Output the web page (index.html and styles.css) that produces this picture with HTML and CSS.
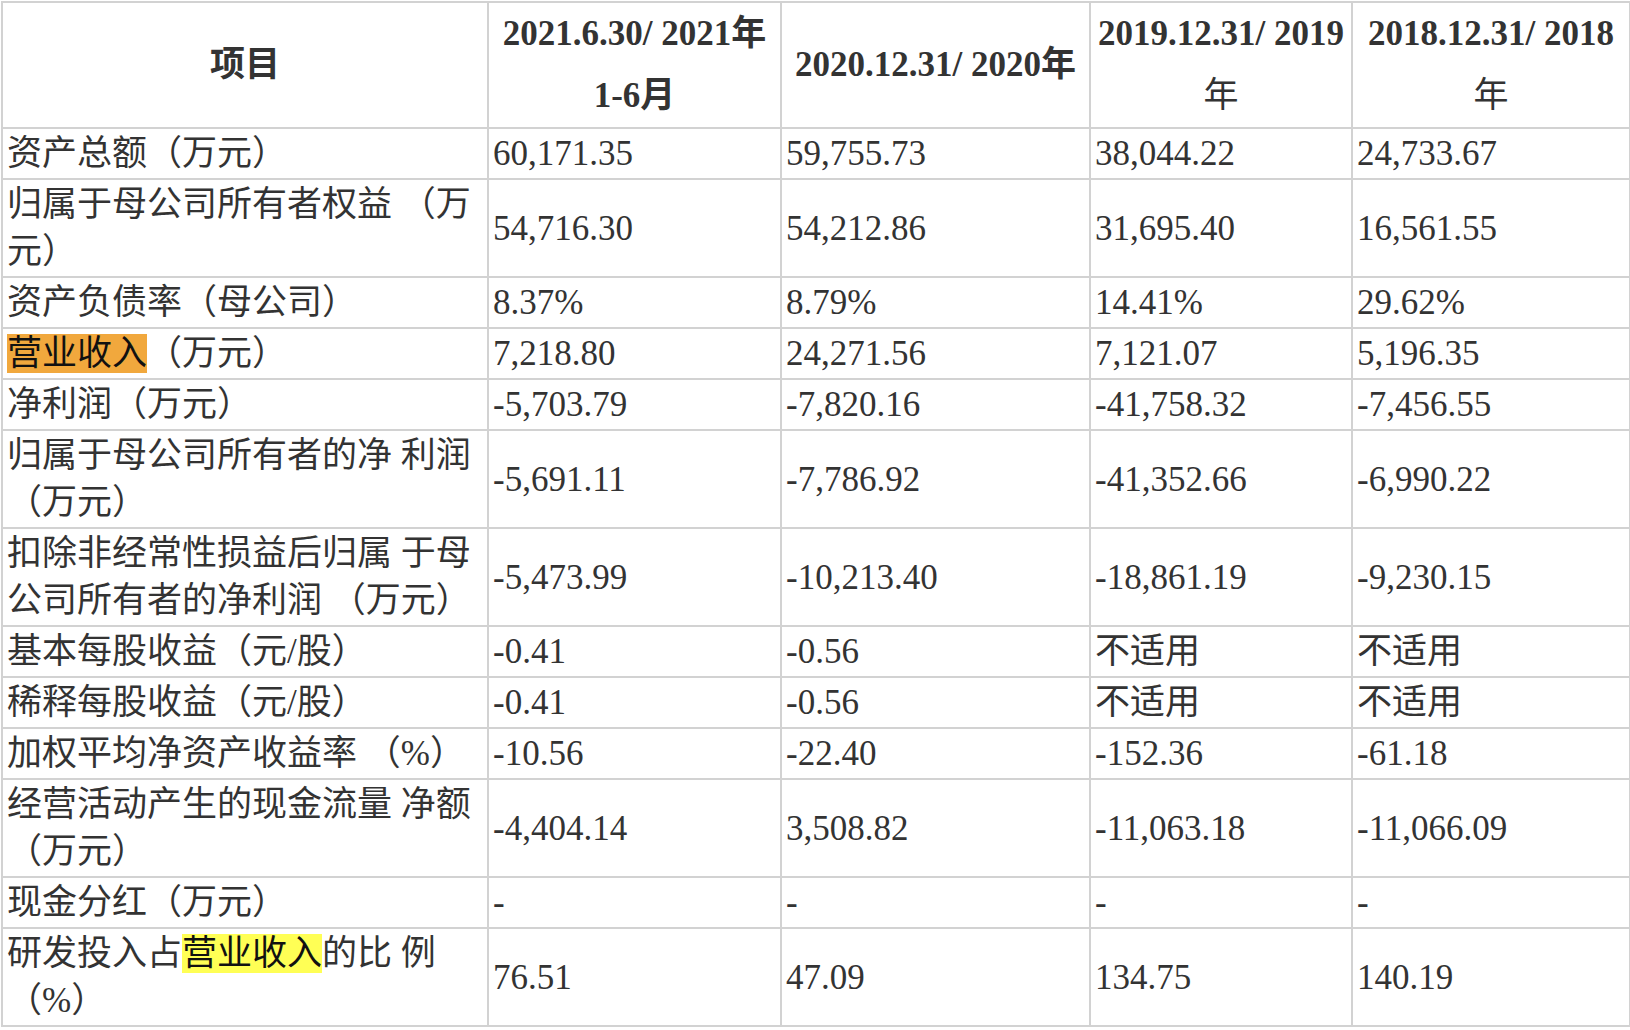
FILE: index.html
```html
<!DOCTYPE html>
<html lang="zh-CN">
<head>
<meta charset="utf-8">
<title>主要财务数据</title>
<link rel="stylesheet" href="styles.css">
</head>
<body>
<table class="fin">
  <colgroup>
    <col class="c1"><col class="c2"><col class="c3"><col class="c4"><col class="c5">
  </colgroup>
  <thead>
    <tr>
      <th><span class="hz">项目</span></th>
      <th>2021.6.30/ 2021<span class="hz">年</span>1-6<span class="hz">月</span></th>
      <th>2020.12.31/ 2020<span class="hz">年</span></th>
      <th>2019.12.31/ 2019<span class="hz-reg">年</span></th>
      <th>2018.12.31/ 2018<span class="hz-reg">年</span></th>
    </tr>
  </thead>
  <tbody>
    <tr><td>资产总额（万元）</td><td>60,171.35</td><td>59,755.73</td><td>38,044.22</td><td>24,733.67</td></tr>
    <tr><td>归属于母公司所有者权益 （万元）</td><td>54,716.30</td><td>54,212.86</td><td>31,695.40</td><td>16,561.55</td></tr>
    <tr><td>资产负债率（母公司）</td><td>8.37%</td><td>8.79%</td><td>14.41%</td><td>29.62%</td></tr>
    <tr><td><span class="hl-orange">营业收入</span>（万元）</td><td>7,218.80</td><td>24,271.56</td><td>7,121.07</td><td>5,196.35</td></tr>
    <tr><td>净利润（万元）</td><td>-5,703.79</td><td>-7,820.16</td><td>-41,758.32</td><td>-7,456.55</td></tr>
    <tr><td>归属于母公司所有者的净 利润（万元）</td><td>-5,691.11</td><td>-7,786.92</td><td>-41,352.66</td><td>-6,990.22</td></tr>
    <tr><td>扣除非经常性损益后归属 于母公司所有者的净利润 （万元）</td><td>-5,473.99</td><td>-10,213.40</td><td>-18,861.19</td><td>-9,230.15</td></tr>
    <tr><td>基本每股收益（元/股）</td><td>-0.41</td><td>-0.56</td><td>不适用</td><td>不适用</td></tr>
    <tr><td>稀释每股收益（元/股）</td><td>-0.41</td><td>-0.56</td><td>不适用</td><td>不适用</td></tr>
    <tr><td>加权平均净资产收益率 （%）</td><td>-10.56</td><td>-22.40</td><td>-152.36</td><td>-61.18</td></tr>
    <tr><td>经营活动产生的现金流量 净额（万元）</td><td>-4,404.14</td><td>3,508.82</td><td>-11,063.18</td><td>-11,066.09</td></tr>
    <tr><td>现金分红（万元）</td><td>-</td><td>-</td><td>-</td><td>-</td></tr>
    <tr><td>研发投入占<span class="hl-yellow">营业收入</span>的比 例（%）</td><td>76.51</td><td>47.09</td><td>134.75</td><td>140.19</td></tr>
  </tbody>
</table>
</body>
</html>
```

FILE: styles.css
```css
html, body {
  margin: 0;
  padding: 0;
  background: #ffffff;
}

body {
  padding: 1px 0 0 1px;
  font-family: "Liberation Serif", "Noto Sans CJK SC", serif;
  color: #333333;
}

.fin {
  border-collapse: collapse;
  table-layout: fixed;
  width: 1628px;
  font-size: 35px;
}

.c1 { width: 486px; }
.c2 { width: 293px; }
.c3 { width: 309px; }
.c4 { width: 262px; }
.c5 { width: 278px; }

.fin th,
.fin td {
  border: 2px solid #d2d2d2;
  padding: 1px 4px;
  line-height: 47px;
  vertical-align: middle;
  text-align: left;
}

.fin th {
  font-weight: 700;
  text-align: center;
  line-height: 62px;
  padding: 0 4px;
}

.fin th .hz,
.fin th .hz-reg {
  font-family: "Noto Sans CJK SC", sans-serif;
  line-height: 1;
}

.fin th .hz {
  font-weight: 600;
}

.fin th .hz-reg {
  font-weight: 400;
}

.hl-orange {
  background: #f1a83d;
  color: #111111;
}

.hl-yellow {
  background: #ffff55;
  color: #111111;
}
```
